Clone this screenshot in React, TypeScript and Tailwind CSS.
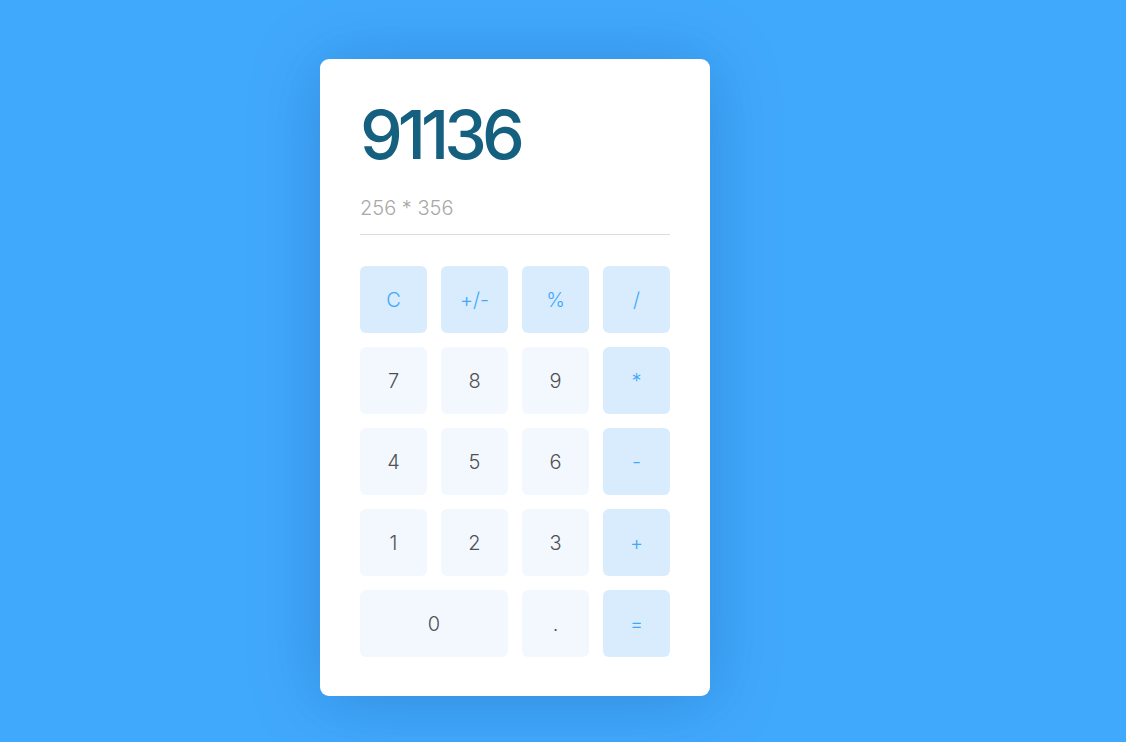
import React from "react";

const keys: { label: string; op?: boolean; wide?: boolean }[] = [
  { label: "C", op: true },
  { label: "+/-", op: true },
  { label: "%", op: true },
  { label: "/", op: true },
  { label: "7" },
  { label: "8" },
  { label: "9" },
  { label: "*", op: true },
  { label: "4" },
  { label: "5" },
  { label: "6" },
  { label: "-", op: true },
  { label: "1" },
  { label: "2" },
  { label: "3" },
  { label: "+", op: true },
  { label: "0", wide: true },
  { label: "." },
  { label: "=", op: true },
];

export default function App() {
  return (
    <div
      className="w-[1126px] h-[742px] bg-[#41a9fc] pl-[320px] pt-[59px] overflow-hidden [font-feature-settings:'calt'_0]"
      style={{ fontFamily: "Inter, 'Noto Sans', sans-serif" }}
    >
      <div className="w-[390px] h-[637px] bg-white rounded-[9px] p-10 shadow-[0_4px_70px_rgba(10,60,130,0.28)]">
        <div className="text-[68px] leading-[70px] font-medium text-[#16607f] tracking-[-5px]">
          91136
        </div>
        <div className="mt-[25px] pb-3 border-b border-[#dddddd] text-[20px] leading-7 font-light text-[#a9a9a9]">
          256 * 356
        </div>
        <div className="mt-[31px] grid grid-cols-4 gap-[14px]">
          {keys.map((k) => (
            <button
              key={k.label}
              className={
                "h-[67px] rounded-[6px] flex items-center justify-center text-[20px] font-light " +
                (k.op
                  ? "bg-[#d8ecfd] text-[#3fa8fc]"
                  : "bg-[#f3f8fe] text-[#505050]") +
                (k.wide ? " col-span-2" : "")
              }
            >
              {k.label}
            </button>
          ))}
        </div>
      </div>
    </div>
  );
}
